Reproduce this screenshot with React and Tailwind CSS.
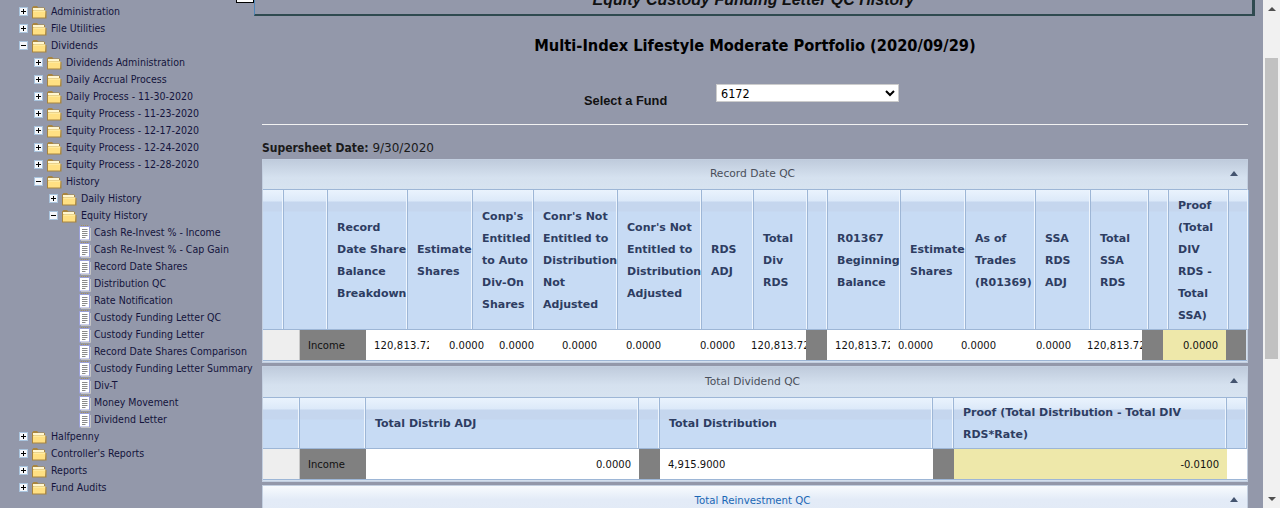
const tree = [
  [0, 'plus', 'Administration'],
  [0, 'plus', 'File Utilities'],
  [0, 'minus', 'Dividends'],
  [1, 'plus', 'Dividends Administration'],
  [1, 'plus', 'Daily Accrual Process'],
  [1, 'plus', 'Daily Process - 11-30-2020'],
  [1, 'plus', 'Equity Process - 11-23-2020'],
  [1, 'plus', 'Equity Process - 12-17-2020'],
  [1, 'plus', 'Equity Process - 12-24-2020'],
  [1, 'plus', 'Equity Process - 12-28-2020'],
  [1, 'minus', 'History'],
  [2, 'plus', 'Daily History'],
  [2, 'minus', 'Equity History'],
  [3, 'doc', 'Cash Re-Invest % - Income'],
  [3, 'doc', 'Cash Re-Invest % - Cap Gain'],
  [3, 'doc', 'Record Date Shares'],
  [3, 'doc', 'Distribution QC'],
  [3, 'doc', 'Rate Notification'],
  [3, 'doc', 'Custody Funding Letter QC'],
  [3, 'doc', 'Custody Funding Letter'],
  [3, 'doc', 'Record Date Shares Comparison'],
  [3, 'doc', 'Custody Funding Letter Summary'],
  [3, 'doc', 'Div-T'],
  [3, 'doc', 'Money Movement'],
  [3, 'doc', 'Dividend Letter'],
  [0, 'plus', 'Halfpenny'],
  [0, 'plus', "Controller's Reports"],
  [0, 'plus', 'Reports'],
  [0, 'plus', 'Fund Audits'],
];

const indent = ['pl-[19px]', 'pl-[34px]', 'pl-[49px]', 'pl-[79px]'];

const recordHead = [
  [21, ''],
  [44, ''],
  [80, 'Record Date Share Balance Breakdown'],
  [65, 'Estimate Shares'],
  [61, "Conp's Entitled to Auto Div-On Shares"],
  [84, "Conr's Not Entitled to Distribution Not Adjusted"],
  [84, "Conr's Not Entitled to Distribution Adjusted"],
  [52, 'RDS ADJ'],
  [54, 'Total Div RDS'],
  [20, ''],
  [73, 'R01367 Beginning Balance'],
  [65, 'Estimate Shares'],
  [70, 'As of Trades (R01369)'],
  [55, 'SSA RDS ADJ'],
  [58, 'Total SSA RDS'],
  [20, ''],
  [60, 'Proof (Total DIV RDS - Total SSA)'],
  [20, ''],
];

const recordRow = [
  [63, 'white', '120,813.72', 'clip'],
  [63, 'white', '0.0000'],
  [50, 'white', '0.0000'],
  [63, 'white', '0.0000'],
  [64, 'white', '0.0000'],
  [74, 'white', '0.0000'],
  [63, 'white', '120,813.72', 'clip'],
  [21, 'gray', ''],
  [63, 'white', '120,813.72', 'clip'],
  [51, 'white', '0.0000'],
  [63, 'white', '0.0000'],
  [75, 'white', '0.0000'],
  [63, 'white', '120,813.72', 'clip'],
  [21, 'gray', ''],
  [63, 'yellow', '0.0000'],
  [20, 'gray', ''],
];

const totalHead = [
  [37, ''],
  [66, ''],
  [273, 'Total Distrib ADJ'],
  [21, ''],
  [273, 'Total Distribution'],
  [21, ''],
  [273, 'Proof (Total Distribution - Total DIV RDS*Rate)'],
  [20, ''],
];

const totalRow = [
  [273, 'white', '0.0000'],
  [21, 'gray', ''],
  [273, 'white', '4,915.9000', 'left'],
  [21, 'gray', ''],
  [273, 'yellow', '-0.0100'],
  [20, 'white', ''],
];

const fills = { white: 'bg-white', gray: 'bg-[#808080]', yellow: 'bg-[#eee8aa]' };
const aligns = {
  left: 'pl-[8px]',
  clip: 'pl-[8px] tracking-[0.15px]',
};

function Toggle({ kind }) {
  return (
    <svg width="9" height="9" viewBox="0 0 9 9" className="shrink-0">
      <rect x="0.5" y="0.5" width="8" height="8" fill="#f4f6fa" stroke="#a9c4de" />
      <path d={kind === 'plus' ? 'M2 4.5h5M4.5 2v5' : 'M2 4.5h5'} stroke="#000" strokeWidth="1" />
    </svg>
  );
}

function Folder() {
  return (
    <svg width="16" height="14" viewBox="0 0 16 14" className="block shrink-0">
      <path d="M1 13.5V2.5L2.5 1h3.5L7.5 2.5h5.5l1 1V6h1.5v7.5z" fill="#a8853f" />
      <path d="M2 3h11v2H2z" fill="#fff6cf" />
      <path d="M2 5.5h12.5l-.5 7H2z" fill="#ffe083" />
      <path d="M2.5 6h11.5" stroke="#fff3b8" />
    </svg>
  );
}

function Doc() {
  return (
    <svg width="12" height="16" viewBox="0 0 12 16" className="block shrink-0">
      <rect x="0.5" y="1.5" width="10" height="13.5" fill="#fff" stroke="#9aa0d8" />
      <path d="M11.5 3v12.5H2" stroke="#c4c4c4" fill="none" />
      <path d="M2 0.5h8" stroke="#a88f58" strokeDasharray="1 1" />
      <path d="M3 4.5h5.5M3 6.5h5.5M3 8.5h5.5M3 10.5h5.5M3 12.5h3.5" stroke="#8a8a8a" />
    </svg>
  );
}

function TreeRow({ level, kind, label }) {
  return (
    <div className={`h-[17px] flex items-center whitespace-nowrap ${indent[level]}`}>
      {kind === 'doc' ? (
        <Doc />
      ) : (
        <>
          <Toggle kind={kind} />
          <span className="ml-[3px]"><Folder /></span>
        </>
      )}
      <span className={kind === 'doc' ? 'ml-[3px]' : 'ml-[4px]'}>{label}</span>
    </div>
  );
}

function HeadRow({ cols, height }) {
  return (
    <div
      className={`flex border-y border-[#9db6d6] bg-[linear-gradient(#eaf3fd_0px,#dce9f9_11px,#c5d6ee_12px,#c5d6ee_21px,#c7dbf4_22px)] ${height}`}
    >
      {cols.map(([w, text], i) => (
        <div
          key={i}
          style={{ width: w }}
          className="shrink-0 flex items-center border-r border-[#9db6d6] shadow-[inset_-1px_0_0_#eef5fd] pl-[9px] pt-[2px] font-bold text-[11px] leading-[22px] text-[#2e3d62] overflow-hidden"
        >
          <span>{text}</span>
        </div>
      ))}
    </div>
  );
}

function DataRow({ cells }) {
  return (
    <div className="flex h-[31px] border-b border-[#9db6d6] text-[10px] text-[#111]">
      <div className="w-[37px] shrink-0 bg-[#eeeeee] border-r border-[#c8c8c8]" />
      <div className="w-[66px] shrink-0 bg-[#808080] flex items-center pl-[8px]">Income</div>
      {cells.map(([w, fill, text, align], i) => (
        <div
          key={i}
          style={{ width: w }}
          className={`shrink-0 flex items-center overflow-hidden whitespace-nowrap ${fills[fill]} ${
            aligns[align] || 'justify-end pr-[8px]'
          }`}
        >
          {text}
        </div>
      ))}
    </div>
  );
}

function Arrow() {
  return <span className="absolute right-[9px] top-[11px] w-0 h-0 border-x-[4px] border-x-transparent border-b-[5px] border-b-[#44546f]" />;
}

function Panel({ title, head, height, titleHeight, cells }) {
  return (
    <section className="border border-[#c3cfe0] bg-[#d3dfee] pb-[1px]">
      <div className={`relative flex items-center justify-center pr-[5px] text-[10.7px] text-[#4a4f5a] bg-[linear-gradient(#bfcbdc,#d5e1ef_60%,#d7e3f0)] ${titleHeight}`}>
        {title}
        <Arrow />
      </div>
      <HeadRow cols={head} height={height} />
      <DataRow cells={cells} />
    </section>
  );
}

export default function App() {
  return (
    <div
      className="w-[1280px] h-[508px] overflow-hidden flex bg-[#9398aa] text-black"
      style={{ fontFamily: '"DejaVu Sans", sans-serif' }}
    >
      <aside className="relative w-[254px] shrink-0 pt-[3px] text-[10.5px] text-[#14143c] font-stretch-condensed">
        {tree.map(([level, kind, label]) => (
          <TreeRow key={label} level={level} kind={kind} label={label} />
        ))}
        <span className="absolute right-0 top-0 w-[18px] h-[3px] bg-white border-x border-b border-black" />
      </aside>

      <main className="w-[1009px] shrink-0">
        <div className="w-[1001px] h-[16px] overflow-hidden flex justify-center items-end border-l border-[#4f86b8] border-b-2 border-b-[#2f4a50] border-r-[3px] border-r-[#2f4a50]">
          <span className="mb-[4px] text-[16px] font-bold italic leading-[20px] text-[#111] font-['Liberation_Sans',sans-serif] whitespace-nowrap">
            Equity Custody Funding Letter QC History
          </span>
        </div>

        <div className="ml-[8px] w-[986px]">
          <h1 className="mt-[18px] h-[24px] text-center text-[16.3px] leading-[24px] font-bold text-black font-stretch-condensed">
            Multi-Index Lifestyle Moderate Portfolio (2020/09/29)
          </h1>
          <div className="mt-[26px] flex items-start font-['Liberation_Sans',sans-serif] h-[18px]">
            <span className="ml-[322px] mt-[8px] w-[132px] text-[12.8px] leading-[18px] font-bold text-[#111]">Select a Fund</span>
            <select className="w-[183px] h-[18px] bg-white pl-0 text-[12.5px] leading-[16px] text-black border border-[#ccc] font-['DejaVu_Sans',sans-serif] font-stretch-condensed" defaultValue="6172">
              <option value="6172">6172</option>
            </select>
          </div>
          <hr className="mt-[22px] border-t border-[#f2f2f2]" />
          <div className="mt-[15px] h-[16px] text-[12px] leading-[16px] text-[#1a1a1a]">
            <b className="font-stretch-condensed">Supersheet Date:</b> 9/30/2020
          </div>
          <div className="mt-[3px] flex flex-col gap-[3px]">
            <Panel title="Record Date QC" head={recordHead} height="h-[141px]" titleHeight="h-[29px]" cells={recordRow} />
            <Panel title="Total Dividend QC" head={totalHead} height="h-[52px]" titleHeight="h-[30px]" cells={totalRow} />
            <section className="border border-[#c3cfe0]">
              <div className="relative h-[30px] flex items-center justify-center pr-[5px] text-[10.2px] text-[#1a67b5] bg-[linear-gradient(#f8fbfe,#e3ebf7_45%,#e2eaf6)]">
                Total Reinvestment QC
                <Arrow />
              </div>
            </section>
          </div>
        </div>
      </main>

      <div className="w-[17px] shrink-0 bg-[#f1f1f1] flex flex-col items-center relative">
        <span className="mt-[7px] w-0 h-0 border-x-[4px] border-x-transparent border-b-[4px] border-b-[#505050]" />
        <span className="mt-[47px] w-[13px] h-[301px] bg-[#c1c1c1]" />
        <span className="absolute bottom-[7px] w-0 h-0 border-x-[4px] border-x-transparent border-t-[4px] border-t-[#505050]" />
      </div>
    </div>
  );
}
